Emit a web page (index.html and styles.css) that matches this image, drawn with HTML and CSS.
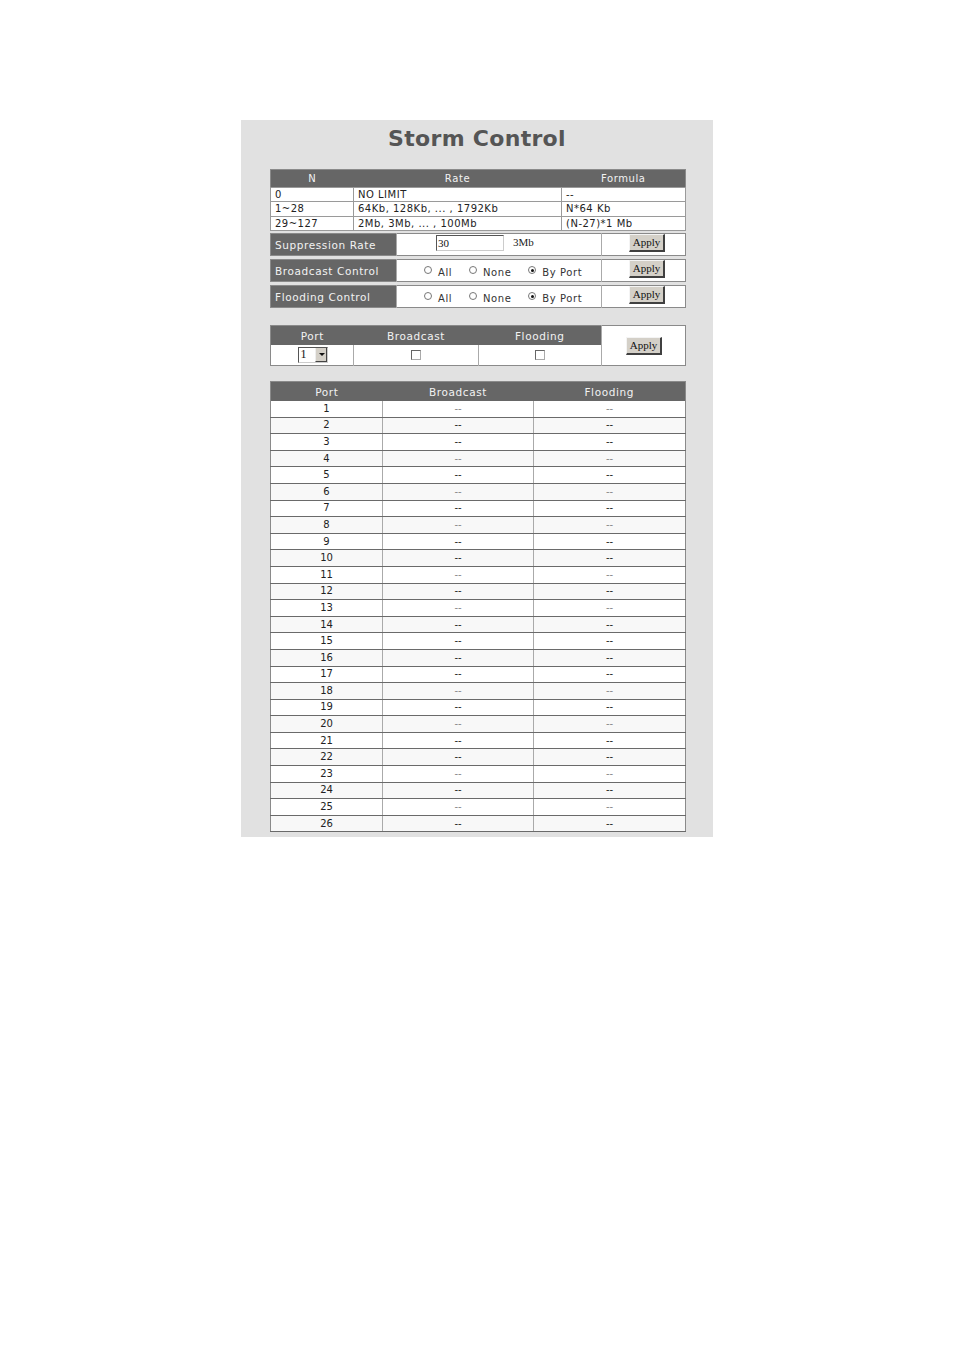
FILE: index.html
```html
<!DOCTYPE html>
<html>
<head>
<meta charset="utf-8">
<title>Storm Control</title>
<link rel="stylesheet" href="styles.css">
</head>
<body>
<div class="panel">
  <h1 class="title">Storm Control</h1>

  <table class="info">
    <colgroup><col class="c-n"><col class="c-rate"><col class="c-form"></colgroup>
    <tr class="head"><th>N</th><th>Rate</th><th>Formula</th></tr>
    <tr class="r1"><td>0</td><td>NO LIMIT</td><td>--</td></tr>
    <tr class="r2"><td>1~28</td><td>64Kb, 128Kb, ... , 1792Kb</td><td>N*64 Kb</td></tr>
    <tr class="r3"><td>29~127</td><td>2Mb, 3Mb, ... , 100Mb</td><td>(N-27)*1 Mb</td></tr>
  </table>

  <table class="ctl first">
    <colgroup><col class="c-lbl"><col class="c-mid"><col class="c-btn"></colgroup>
    <tr>
      <td class="lbl">Suppression Rate</td>
      <td class="mid rate"><span class="textbox">30</span><span class="unit">3Mb</span></td>
      <td class="btncell"><span class="btn">Apply</span></td>
    </tr>
  </table>

  <table class="ctl">
    <colgroup><col class="c-lbl"><col class="c-mid"><col class="c-btn"></colgroup>
    <tr>
      <td class="lbl">Broadcast Control</td>
      <td class="mid radios">
        <span class="opt"><span class="radio"></span>All</span>
        <span class="opt"><span class="radio"></span>None</span>
        <span class="opt"><span class="radio on"></span>By Port</span>
      </td>
      <td class="btncell"><span class="btn">Apply</span></td>
    </tr>
  </table>

  <table class="ctl">
    <colgroup><col class="c-lbl"><col class="c-mid"><col class="c-btn"></colgroup>
    <tr>
      <td class="lbl">Flooding Control</td>
      <td class="mid radios">
        <span class="opt"><span class="radio"></span>All</span>
        <span class="opt"><span class="radio"></span>None</span>
        <span class="opt"><span class="radio on"></span>By Port</span>
      </td>
      <td class="btncell"><span class="btn">Apply</span></td>
    </tr>
  </table>

  <table class="port">
    <colgroup><col class="p-port"><col class="p-bc"><col class="p-fl"><col class="p-btn"></colgroup>
    <tr class="head"><th>Port</th><th>Broadcast</th><th>Flooding</th><td class="btncell pbtn" rowspan="2"><span class="btn">Apply</span></td></tr>
    <tr class="prow">
      <td><span class="select"><span class="sval">1</span><span class="sarrow"></span></span></td>
      <td><span class="check"></span></td>
      <td><span class="check"></span></td>
    </tr>
  </table>

  <table class="list">
    <colgroup><col class="l-port"><col class="l-bc"><col class="l-fl"></colgroup>
    <tr class="head"><th>Port</th><th>Broadcast</th><th>Flooding</th></tr>
    <tr class="odd"><td>1</td><td class="lt">--</td><td class="lt">--</td></tr>
    <tr class="even"><td>2</td><td>--</td><td>--</td></tr>
    <tr class="odd"><td>3</td><td>--</td><td>--</td></tr>
    <tr class="even"><td>4</td><td class="lt">--</td><td class="lt">--</td></tr>
    <tr class="odd"><td>5</td><td>--</td><td>--</td></tr>
    <tr class="even"><td>6</td><td class="lt">--</td><td class="lt">--</td></tr>
    <tr class="odd"><td>7</td><td>--</td><td>--</td></tr>
    <tr class="even"><td>8</td><td class="lt">--</td><td class="lt">--</td></tr>
    <tr class="odd"><td>9</td><td>--</td><td>--</td></tr>
    <tr class="even"><td>10</td><td>--</td><td>--</td></tr>
    <tr class="odd"><td>11</td><td class="lt">--</td><td class="lt">--</td></tr>
    <tr class="even"><td>12</td><td>--</td><td>--</td></tr>
    <tr class="odd"><td>13</td><td class="lt">--</td><td class="lt">--</td></tr>
    <tr class="even"><td>14</td><td>--</td><td>--</td></tr>
    <tr class="odd"><td>15</td><td>--</td><td>--</td></tr>
    <tr class="even"><td>16</td><td>--</td><td>--</td></tr>
    <tr class="odd"><td>17</td><td>--</td><td>--</td></tr>
    <tr class="even"><td>18</td><td class="lt">--</td><td class="lt">--</td></tr>
    <tr class="odd"><td>19</td><td>--</td><td>--</td></tr>
    <tr class="even"><td>20</td><td class="lt">--</td><td class="lt">--</td></tr>
    <tr class="odd"><td>21</td><td>--</td><td>--</td></tr>
    <tr class="even"><td>22</td><td>--</td><td>--</td></tr>
    <tr class="odd"><td>23</td><td class="lt">--</td><td class="lt">--</td></tr>
    <tr class="even"><td>24</td><td>--</td><td>--</td></tr>
    <tr class="odd"><td>25</td><td class="lt">--</td><td class="lt">--</td></tr>
    <tr class="even"><td>26</td><td>--</td><td>--</td></tr>
  </table>
</div>
</body>
</html>
```

FILE: styles.css
```css
html, body {
  margin: 0;
  padding: 0;
  background: #ffffff;
}

body {
  font-family: "DejaVu Sans", Verdana, sans-serif;
  font-size: 10px;
  color: #222;
}

.panel {
  margin: 120px 0 0 241px;
  width: 472px;
  height: 717px;
  box-sizing: border-box;
  background: #e1e1e1;
  padding: 6px 0 0 29px;
}

.title {
  margin: 0 0 0 -29px;
  text-align: center;
  font-family: "DejaVu Sans", Verdana, sans-serif;
  font-weight: bold;
  font-size: 22px;
  line-height: 26px;
  color: #555555;
  letter-spacing: 0.3px;
}

table {
  border-collapse: collapse;
  table-layout: fixed;
  width: 415px;
  background: #ffffff;
}

th {
  background: #666666;
  color: #f2f2f2;
  font-weight: normal;
  font-size: 10px;
  padding: 0;
  letter-spacing: 0.6px;
}

td {
  padding: 0;
}

/* info table */
.info {
  margin-top: 17px;
  border: 1px solid #8a8a8a;
}
.info .c-n { width: 83px; }
.info .c-rate { width: 208px; }
.info .c-form { width: 124px; }
.info .head th { height: 17px; }
.info td {
  border: 1px solid #9a9a9a;
  padding-left: 4px;
  height: 13px;
  line-height: 12px;
  font-size: 10px;
  color: #222;
  letter-spacing: 0.5px;
}
.info .r2 td { height: 14px; }

/* control rows */
.ctl {
  margin-top: 3px;
  border: 1px solid #8a8a8a;
}
.ctl.first { margin-top: 2px; }
.ctl .c-lbl { width: 126px; }
.ctl .c-mid { width: 205px; }
.ctl .c-btn { width: 84px; }
.ctl td {
  height: 22px;
  box-sizing: border-box;
  border-left: 1px solid #aaaaaa;
}
.ctl .lbl {
  background: #666666;
  color: #f2f2f2;
  padding-left: 4px;
  font-size: 10.5px;
  letter-spacing: 0.6px;
  border-left: none;
}
.mid.rate {
  padding-left: 39px;
  vertical-align: top;
  padding-top: 1px;
}
.textbox {
  display: inline-block;
  vertical-align: top;
  width: 65px;
  height: 14px;
  border-top: 1px solid #555;
  border-left: 1px solid #555;
  border-right: 1px solid #ccc;
  border-bottom: 1px solid #ccc;
  font-family: "Liberation Serif", "Times New Roman", serif;
  font-size: 11px;
  line-height: 14px;
  padding-left: 1px;
  color: #111;
}
.unit {
  display: inline-block;
  vertical-align: top;
  margin-left: 9px;
  font-family: "Liberation Serif", "Times New Roman", serif;
  font-size: 11px;
  line-height: 14px;
  color: #222;
}
.radios {
  padding-left: 27px;
  padding-top: 2px;
  font-size: 10px;
  letter-spacing: 0.6px;
  color: #333;
}
.opt {
  display: inline-flex;
  align-items: center;
  margin-right: 13px;
}
.opt:last-child { margin-right: 0; }
.radio {
  display: inline-block;
  width: 6px;
  height: 6px;
  border: 1px solid #777;
  border-radius: 50%;
  margin-right: 6px;
  margin-top: -4px;
  position: relative;
}
.radio.on::after {
  content: "";
  position: absolute;
  left: 1.5px;
  top: 1.5px;
  width: 3px;
  height: 3px;
  border-radius: 50%;
  background: #111;
}

.btncell {
  text-align: left;
  vertical-align: top;
}
.ctl .btncell {
  padding-left: 27px;
  padding-top: 0;
}
.btn {
  display: inline-block;
  width: 33px;
  height: 15px;
  background: #d4d0c8;
  border-top: 1px solid #f4f4f4;
  border-left: 1px solid #f4f4f4;
  border-right: 2px solid #404040;
  border-bottom: 2px solid #404040;
  font-family: "Liberation Serif", "Times New Roman", serif;
  font-size: 11px;
  line-height: 14px;
  text-align: center;
  color: #111;
}

/* port config table */
.port {
  margin-top: 17px;
  border: 1px solid #8a8a8a;
}
.port .p-port { width: 83px; }
.port .p-bc { width: 125px; }
.port .p-fl { width: 123px; }
.port .p-btn { width: 84px; }
.port .head th { height: 19px; font-size: 10.5px; }
.port .prow td {
  height: 20px;
  text-align: center;
  border-left: 1px solid #aaaaaa;
  vertical-align: middle;
}
.port .prow td:first-child { border-left: none; }
.pbtn {
  border-left: 1px solid #aaaaaa;
  vertical-align: middle !important;
  padding-left: 24px;
}
.select {
  display: inline-flex;
  align-items: stretch;
  width: 28px;
  height: 14px;
  border-top: 1px solid #555;
  border-left: 1px solid #555;
  border-right: 1px solid #ccc;
  border-bottom: 1px solid #ccc;
  margin-left: 1px;
  background: #fff;
  text-align: left;
}
.sval {
  flex: 1;
  font-family: "Liberation Serif", "Times New Roman", serif;
  font-size: 12px;
  line-height: 13px;
  padding-left: 2px;
  color: #111;
}
.sarrow {
  width: 12px;
  background: #d4d0c8;
  border-left: 1px solid #eee;
  border-right: 1px solid #444;
  border-bottom: 1px solid #444;
  box-sizing: border-box;
  position: relative;
}
.sarrow::after {
  content: "";
  position: absolute;
  left: 3px;
  top: 5px;
  border-left: 3px solid transparent;
  border-right: 3px solid transparent;
  border-top: 3px solid #111;
}
.check {
  display: inline-block;
  width: 8px;
  height: 8px;
  border-top: 1px solid #666;
  border-left: 1px solid #666;
  border-right: 1px solid #aaa;
  border-bottom: 1px solid #aaa;
  background: #fff;
  margin-top: 2px;
}

/* list table */
.list {
  margin-top: 15px;
  border: 1px solid #8a8a8a;
}
.list .l-port { width: 112px; }
.list .l-bc { width: 151px; }
.list .l-fl { width: 152px; }
.list .head th { height: 19px; font-size: 10.5px; }
.list td {
  height: 15.6px;
  text-align: center;
  border-bottom: 1px solid #6a6a6a;
  border-left: 1px solid #aaaaaa;
  font-size: 10px;
  line-height: 12px;
  color: #222;
}
.list td:first-child { border-left: none; }
.list tr.odd td { background: #ffffff; }
.list tr.even td { background: #f8f8f8; }
.list td.lt { color: #888; }
```
